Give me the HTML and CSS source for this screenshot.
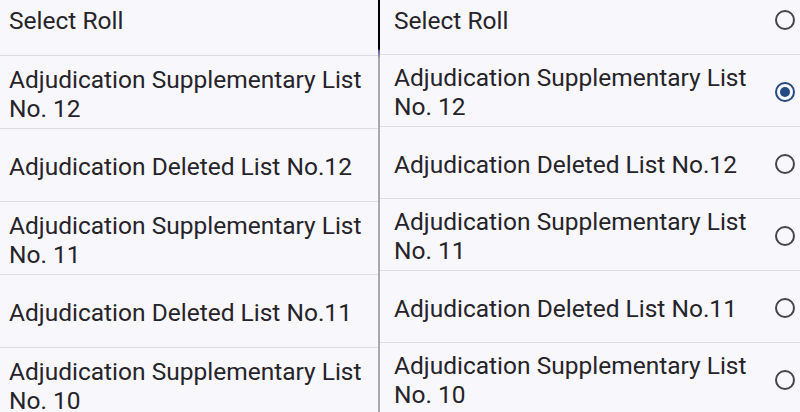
FILE: index.html
```html
<!DOCTYPE html>
<html>
<head>
<meta charset="utf-8">
<link rel="stylesheet" href="styles.css">
</head>
<body>
<div class="screen">
  <div class="panel left">
    <div class="row first"><span class="label">Select Roll</span></div>
    <div class="row"><span class="label">Adjudication Supplementary List No. 12</span></div>
    <div class="row"><span class="label">Adjudication Deleted List No.12</span></div>
    <div class="row"><span class="label">Adjudication Supplementary List No. 11</span></div>
    <div class="row"><span class="label">Adjudication Deleted List No.11</span></div>
    <div class="row"><span class="label">Adjudication Supplementary List No. 10</span></div>
  </div>
  <div class="divider"></div>
  <div class="panel right">
    <div class="corner"></div>
    <div class="row first"><span class="label">Select Roll</span><span class="radio"></span></div>
    <div class="row"><span class="label">Adjudication Supplementary List No. 12</span><span class="radio on"></span></div>
    <div class="row"><span class="label">Adjudication Deleted List No.12</span><span class="radio"></span></div>
    <div class="row"><span class="label">Adjudication Supplementary List No. 11</span><span class="radio"></span></div>
    <div class="row"><span class="label">Adjudication Deleted List No.11</span><span class="radio"></span></div>
    <div class="row"><span class="label">Adjudication Supplementary List No. 10</span><span class="radio"></span></div>
  </div>
</div>
</body>
</html>
```
FILE: styles.css
```css
html, body {
  margin: 0;
  padding: 0;
  background: #f8f7fc;
}
.screen {
  display: flex;
  width: 800px;
  height: 412px;
  overflow: hidden;
  font-family: Roboto, "Noto Sans", sans-serif;
  color: #26242a;
  background: #f8f7fc;
}
.panel {
  display: flex;
  flex-direction: column;
  position: relative;
}
.left {
  width: 378px;
}
.divider {
  width: 2px;
  background: #a9a8ae;
  flex: none;
}
.right {
  flex: 1;
}
.row {
  display: flex;
  align-items: center;
  flex: none;
  border-bottom: 1px solid #dddce1;
  box-sizing: border-box;
  font-size: 24.5px;
  line-height: 29px;
}
.left .row {
  height: 73px;
  padding: 3px 10px 0 9px;
}
.left .row.first {
  height: 56px;
  padding: 0 10px 15px 9px;
}
.right .row {
  height: 72px;
  padding: 3px 5px 0 14px;
  justify-content: space-between;
}
.right .row.first {
  height: 55px;
  padding: 0 5px 14px 14px;
}
.label {
  display: block;
}
.right .label {
  max-width: 362px;
}
.radio {
  width: 20px;
  height: 20px;
  box-sizing: border-box;
  border: 2px solid #46444b;
  border-radius: 50%;
  flex: none;
  position: relative;
}
.radio.on {
  border-color: #254a80;
}
.radio.on::after {
  content: "";
  position: absolute;
  left: 3px;
  top: 3px;
  width: 10px;
  height: 10px;
  border-radius: 50%;
  background: #254a80;
}
.corner {
  position: absolute;
  left: -2px;
  top: 0;
  width: 8px;
  height: 58px;
  box-sizing: border-box;
  border-left: 2px solid #000;
  border-image: linear-gradient(to bottom, #000 0, #000 48px, #6a5aa8 50px, #a9a8ae 58px) 1;
}
```
